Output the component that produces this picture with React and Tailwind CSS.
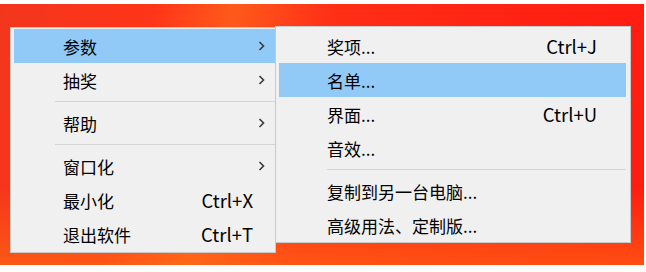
import React from "react";

const Chevron = () => (
  <svg width="7" height="10" viewBox="0 0 7 10" className="shrink-0">
    <polyline points="1.5,1 5.5,5 1.5,9" fill="none" stroke="#3a3a3a" strokeWidth="1.6" />
  </svg>
);

function LeftRow({ label, shortcut, arrow, active }) {
  return (
    <div
      className={
        "flex h-[34px] items-center pl-[49px] " +
        (active ? "bg-[#91c9f7]" : "")
      }
    >
      <span className="flex-1">{label}</span>
      {shortcut && <span className="pr-[22px] text-[18.5px]">{shortcut}</span>}
      {arrow && (
        <span className="pr-[10px]">
          <Chevron />
        </span>
      )}
    </div>
  );
}

function RightRow({ label, shortcut, active }) {
  return (
    <div
      className={
        "flex h-[34px] items-center pl-[48px] pr-[29px] " +
        (active ? "bg-[#91c9f7]" : "")
      }
    >
      <span className="flex-1">{label}</span>
      {shortcut && <span className="text-[18.5px]">{shortcut}</span>}
    </div>
  );
}

export default function App() {
  return (
    <div
      className="w-[646px] h-[272px] bg-white pt-[4px] pb-[7px] pr-[2px] text-[17px] leading-none text-black"
      style={{ fontFamily: '"Noto Sans CJK SC", "Noto Sans", sans-serif' }}
    >
      <div className="h-full flex items-start pl-[10px] pt-[22px] bg-[linear-gradient(to_bottom,transparent_70%,rgba(255,110,20,0.6)_100%),linear-gradient(100deg,#f2361c_0%,#ff3418_22%,#ff5a1c_34%,#ff3016_48%,#ff2414_70%,#ff1c10_100%)]">
        <div className="mt-[1px] w-[266px] h-[226px] bg-[#f0f0f0] border border-[#c9c9c9] pt-[1px] pl-[3px]">
          <LeftRow label="参数" arrow active />
          <LeftRow label="抽奖" arrow />
          <div className="h-[9px] flex items-center pl-[41px]">
            <div className="h-px w-full bg-[#d5d5d5]" />
          </div>
          <LeftRow label="帮助" arrow />
          <div className="h-[9px] flex items-center pl-[41px]">
            <div className="h-px w-full bg-[#d5d5d5]" />
          </div>
          <LeftRow label="窗口化" arrow />
          <LeftRow label="最小化" shortcut="Ctrl+X" />
          <LeftRow label="退出软件" shortcut="Ctrl+T" />
        </div>
        <div className="-ml-px w-[356px] h-[217px] bg-[#f0f0f0] border border-[#c9c9c9] pt-[2px] pl-[3px] pr-[4px]">
          <RightRow label="奖项..." shortcut="Ctrl+J" />
          <RightRow label="名单..." active />
          <RightRow label="界面..." shortcut="Ctrl+U" />
          <RightRow label="音效..." />
          <div className="h-[9px] flex items-center pl-[48px]">
            <div className="h-px w-full bg-[#d5d5d5]" />
          </div>
          <RightRow label="复制到另一台电脑..." />
          <RightRow label="高级用法、定制版..." />
        </div>
      </div>
    </div>
  );
}
